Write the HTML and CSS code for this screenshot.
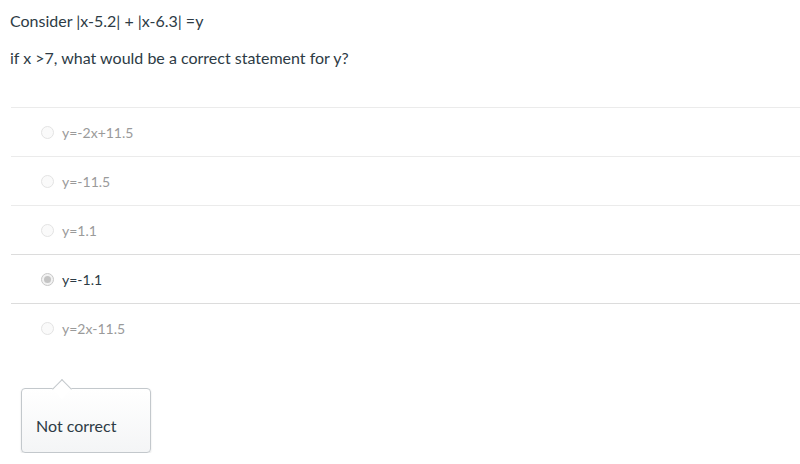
FILE: index.html
```html
<!DOCTYPE html>
<html lang="en">
<head>
    <meta charset="UTF-8">
    <meta name="viewport" content="width=device-width, initial-scale=1.0">
    <title>Quiz Question</title>
    <link rel="stylesheet" href="styles.css">
</head>
<body>
    <div class="question">
        <div class="question-text">
            <p>Consider |x-5.2| + |x-6.3| =y</p>
            <p>if x &gt;7, what would be a correct statement for y?</p>
        </div>

        <ul class="answers">
            <li class="answer"><span class="radio"></span><span class="label">y=-2x+11.5</span></li>
            <li class="answer"><span class="radio"></span><span class="label">y=-11.5</span></li>
            <li class="answer"><span class="radio"></span><span class="label">y=1.1</span></li>
            <li class="answer selected"><span class="radio"></span><span class="label">y=-1.1</span></li>
            <li class="answer"><span class="radio"></span><span class="label">y=2x-11.5</span></li>
        </ul>

        <div class="feedback">
            <div class="bubble">Not correct</div>
        </div>
    </div>
</body>
</html>
```

FILE: styles.css
```css
body {
    margin: 0;
    font-family: 'Lato', 'Liberation Sans', sans-serif;
    color: #2d3b45;
    background: #fff;
}

.question {
    padding: 11px 0 0 10px;
}

.question-text p {
    margin: 0 0 17px;
    font-size: 16px;
    line-height: 20px;
}

.question-text {
    margin-bottom: 39px;
}

.answers {
    list-style: none;
    margin: 0 0 0 1px;
    padding: 0;
}

.answer {
    display: flex;
    align-items: center;
    height: 48px;
    border-top: 1px solid #ebebeb;
    padding-left: 30px;
    font-size: 14px;
    color: #9a9a9a;
}

.answer.selected {
    color: #2d3b45;
}

.selected,
.selected + .answer {
    border-top-color: #dcdcdc;
}

.radio {
    box-sizing: border-box;
    width: 13px;
    height: 13px;
    border-radius: 50%;
    border: 1px solid #e3e3e3;
    background: #fafafa;
    margin-right: 8px;
    position: relative;
}

.selected .radio {
    border-color: #c8c8c8;
    background: #f2f2f2;
}

.selected .radio::after {
    content: '';
    position: absolute;
    left: 2px;
    top: 2px;
    width: 7px;
    height: 7px;
    border-radius: 50%;
    background: #c4c4c4;
}

.feedback {
    padding: 36px 0 0 11px;
}

.bubble {
    position: relative;
    box-sizing: border-box;
    width: 130px;
    height: 65px;
    padding: 27px 0 0 14px;
    font-size: 16px;
    line-height: 20px;
    border: 1px solid #c3c8cc;
    border-radius: 4px;
    background: linear-gradient(#fff, #f4f5f6);
    box-shadow: 0 1px 2px rgba(0, 0, 0, 0.12);
}

.bubble::before {
    content: '';
    position: absolute;
    left: 33px;
    top: -7px;
    width: 13px;
    height: 13px;
    background: #fff;
    border-left: 1px solid #c3c8cc;
    border-top: 1px solid #c3c8cc;
    transform: rotate(45deg);
}
```
